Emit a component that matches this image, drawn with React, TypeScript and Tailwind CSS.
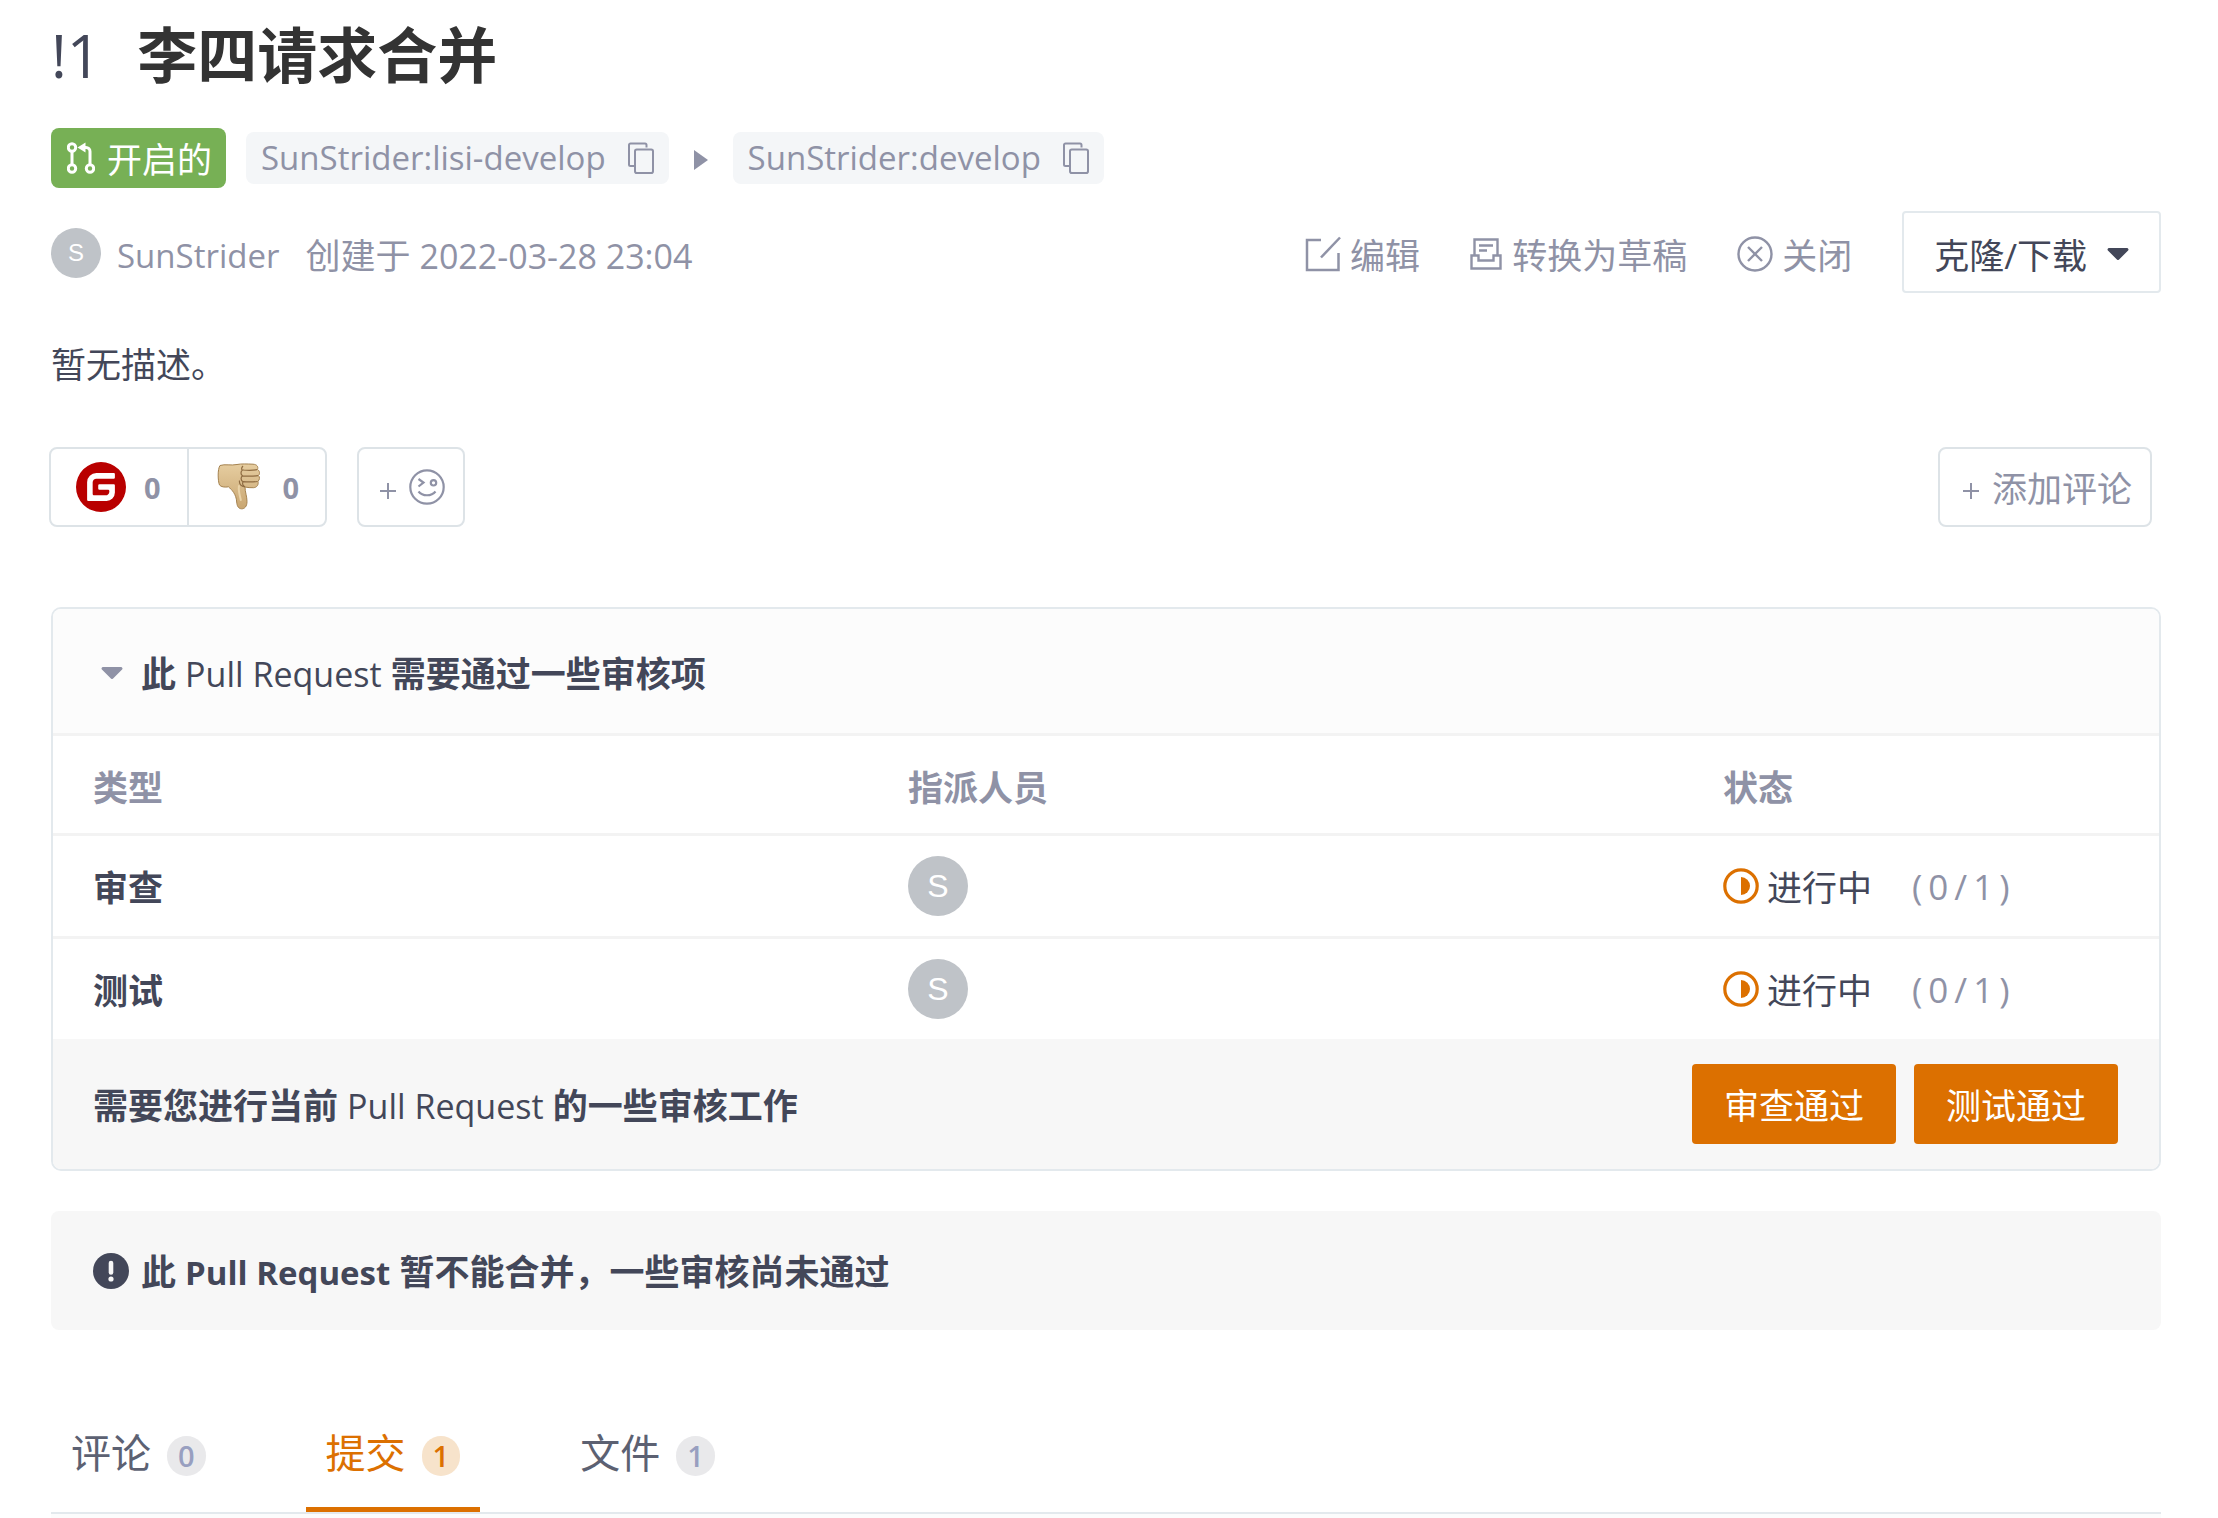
import { useState } from 'react'
import { SiGitee } from 'react-icons/si'

const reviewRows = [
  { type: '审查', member: 'S', status: '进行中', done: 0, total: 1 },
  { type: '测试', member: 'S', status: '进行中', done: 0, total: 1 },
]

const tabs = [
  { id: 'comments', label: '评论', count: 0 },
  { id: 'commits', label: '提交', count: 1 },
  { id: 'files', label: '文件', count: 1 },
]

function PullRequestIcon() {
  return (
    <svg className="w-7 h-8 shrink-0" viewBox="0 0 28 32" fill="none" stroke="currentColor" strokeWidth="3">
      <circle cx="5" cy="5.5" r="3.7" />
      <circle cx="5" cy="26.5" r="3.7" />
      <circle cx="23" cy="26.5" r="3.7" />
      <path d="M5 9v14M23 23V9.5a4 4 0 0 0-4-4h-3" />
      <path d="M18.5 0.5v10L10.5 5.5z" fill="currentColor" stroke="none" />
    </svg>
  )
}

function CopyIcon() {
  return (
    <svg className="w-[26px] h-8" viewBox="0 0 26 32" fill="none" stroke="currentColor" strokeWidth="2">
      <path d="M18.5 5.5V3a1.5 1.5 0 0 0-1.5-1.5H2.5A1.5 1.5 0 0 0 1 3v19.5A1.5 1.5 0 0 0 2.5 24H6" />
      <rect x="7" y="7.5" width="18" height="23.5" rx="1.8" />
    </svg>
  )
}

function EditIcon() {
  return (
    <svg className="w-9 h-9" viewBox="0 0 36 36" fill="none" stroke="currentColor" strokeWidth="2.5">
      <path d="M16 4H2v30h31.5V17" />
      <path d="M35 1.5 16 21.5" />
    </svg>
  )
}

function DraftIcon() {
  return (
    <svg className="w-8 h-8" viewBox="0 0 32 32" fill="none" stroke="currentColor" strokeWidth="2.4">
      <path d="M4.5 17V1.5h23V17" />
      <path d="M1.5 17.5h7v5h15v-5h7v13h-29z" />
      <path d="M9 7.5h14M9 12.500h8" />
    </svg>
  )
}

function CloseIcon() {
  return (
    <svg className="w-9 h-9" viewBox="0 0 36 36" fill="none" stroke="currentColor" strokeWidth="2.4">
      <circle cx="18" cy="18" r="16.5" />
      <path d="M11 11l14 14M25 11 11 25" />
    </svg>
  )
}

function Caret() {
  return (
    <svg className="w-[22px] h-3 shrink-0" viewBox="0 0 22 12" fill="currentColor">
      <path d="M2 0h18a1.5 1.5 0 0 1 1.1 2.5l-9 9a1.5 1.5 0 0 1-2.2 0l-9-9A1.5 1.5 0 0 1 2 0z" />
    </svg>
  )
}

function ThumbDownIcon() {
  return (
    <svg className="w-[44px] h-12" viewBox="0 0 44 48">
      <defs>
        <linearGradient id="skin" x1="0" y1="0" x2="0" y2="1">
          <stop offset="0" stopColor="#e6cda0" />
          <stop offset="1" stopColor="#c9a671" />
        </linearGradient>
      </defs>
      <path
        d="M3 2.5C8 .8 14 2.8 20 1.5c4-.8 10-.6 16-.3 4 .2 5.5 2.5 4.5 5.3 2.5 1.5 2.5 4.5 1 6 1.5 1.5 1.2 4.5-.5 5.7.8 3.5-1 6.3-4.5 6.5-3 .2-6-.2-8.500-.7 0 5 2 9.500 2 14.500 0 5-2.500 7.500-5.500 7.300-3.500-.2-4.500-3.300-4.800-6.800C19.200 31 15 27 11.500 23.800 8 24.500 4 24 2.500 22 .8 18 .5 6 3 2.500z"
        fill="url(#skin)"
        stroke="#a5824f"
        strokeWidth="1"
      />
      <path
        d="M28 24c-4-.5-6-3-5.5-6.5M40 6.7c-4 .8-9 .8-14 .3M41 12.600c-5 .8-10 .8-15.500.2M40.500 18.500c-5 .6-9 .6-14.500.2M26 3c-2 2-1.500 4-.5 4-2 1.500-2 4.500 0 5.700-2 1.500-1.800 5 .5 6-1 2 0 4.300 2 5"
        fill="none"
        stroke="#8f6c42"
        strokeWidth="1.2"
      />
      <path d="M22 23c-1 4 .8 9 1.8 14" fill="none" stroke="#ead3a8" strokeWidth="2" strokeLinecap="round" />
    </svg>
  )
}

function WinkIcon() {
  return (
    <svg className="w-9 h-9" viewBox="0 0 36 36" fill="none" stroke="currentColor" strokeWidth="2.2">
      <circle cx="18" cy="18" r="16.7" />
      <path d="M9.5 10l5 3.5-5 4" />
      <circle cx="24.5" cy="13.8" r="2.7" />
      <path d="M9.5 22.500c4 5 13 5 17 0" />
    </svg>
  )
}

function PlusIcon() {
  return (
    <svg className="w-4 h-4 mt-2" viewBox="0 0 16 16" stroke="currentColor" strokeWidth="2">
      <path d="M8 0v16M0 8h16" />
    </svg>
  )
}

function ProgressIcon() {
  return (
    <svg className="w-9 h-9 text-[#dc7000]" viewBox="0 0 36 36">
      <circle cx="18" cy="18" r="16.2" fill="none" stroke="currentColor" strokeWidth="3.2" />
      <path d="M18 9a9 9 0 0 1 0 18z" fill="currentColor" />
    </svg>
  )
}

function AlertIcon() {
  return (
    <svg className="w-9 h-9 shrink-0" viewBox="0 0 36 36">
      <circle cx="18" cy="18" r="18" fill="currentColor" />
      <path d="M18 10v9.500" stroke="#f7f7f7" strokeWidth="4.6" strokeLinecap="round" />
      <circle cx="18" cy="26" r="2.6" fill="#f7f7f7" />
    </svg>
  )
}

function BranchChip({ name }: { name: string }) {
  return (
    <div className="flex items-center gap-[22px] h-[52px] px-[15px] rounded-lg bg-[#f4f6f8] text-[#8f92a6]">
      <a href="#branch" className="text-[33px]">{name}</a>
      <button type="button" aria-label="复制">
        <CopyIcon />
      </button>
    </div>
  )
}

export default function App() {
  const [activeTab, setActiveTab] = useState('commits')

  return (
    <div className="min-h-screen flex flex-col bg-white pl-[51px] pr-[57px] pt-[14px] text-[35px] leading-[50px] text-[#434759] font-['Open_Sans','Noto_Sans_CJK_SC',sans-serif]">
      {/* Title */}
      <h1 className="flex items-center gap-9 text-[60px] leading-[82px]">
        <span className="font-normal">!1</span>
        <span className="font-bold text-[#333333]">李四请求合并</span>
      </h1>

      {/* Branches */}
      <div className="flex items-center mt-8">
        <span className="flex items-center gap-3 h-[60px] px-[14px] pl-4 rounded-lg bg-[#77b055] text-white">
          <PullRequestIcon />
          <span className="pt-1">开启的</span>
        </span>
        <div className="flex items-center gap-6 ml-5">
          <BranchChip name="SunStrider:lisi-develop" />
          <svg className="w-4 h-5 mt-1" viewBox="0 0 16 20" fill="#8f92a6">
            <path d="M1 0l14 10L1 20z" />
          </svg>
          <BranchChip name="SunStrider:develop" />
        </div>
      </div>

      {/* Author and actions */}
      <div className="flex items-center justify-between mt-[23px] text-[#8f92a6]">
        <div className="flex items-center">
          <span className="flex items-center justify-center w-[50px] h-[50px] mt-0.5 rounded-full bg-[#bfc3c8] text-white text-2xl font-['Liberation_Sans',sans-serif]">S</span>
          <a href="#author" className="ml-4 pt-2 text-[33px]">SunStrider</a>
          <span className="ml-[26px] pt-2">创建于</span>
          <time className="ml-[9px] pt-2 text-[34px]">2022-03-28 23:04</time>
        </div>
        <div className="flex items-center gap-[50px]">
          <button type="button" className="flex items-center gap-[9px] pt-1">
            <EditIcon />
            <span className="pt-1">编辑</span>
          </button>
          <button type="button" className="flex items-center gap-[10px] pt-1">
            <DraftIcon />
            <span className="pt-1">转换为草稿</span>
          </button>
          <button type="button" className="flex items-center gap-[9px] pt-1">
            <CloseIcon />
            <span className="pt-1">关闭</span>
          </button>
          <button type="button" className="flex items-center gap-5 h-[82px] px-[30px] pt-1 border-2 border-[#e3e9ed] rounded text-[#434759]">
            <span className="pt-1">克隆/下载</span>
            <Caret />
          </button>
        </div>
      </div>

      <p className="mt-[47px]">暂无描述。</p>

      {/* Reactions */}
      <div className="flex items-center justify-between mt-[57px] -ml-0.5 pr-[9px] text-[#8f92a6]">
        <div className="flex items-center gap-[30px]">
          <div className="flex h-20 border-2 border-[#dde3e7] rounded-lg text-[29px] font-bold">
            <button type="button" className="flex items-center gap-[18px] pl-[25px] pr-[26px]">
              <SiGitee className="w-[50px] h-[50px] text-[#b90000]" />
              <span className="pt-0.5">0</span>
            </button>
            <button type="button" className="flex items-center gap-[22px] pl-7 pr-[26px] border-l-2 border-[#dde3e7]">
              <ThumbDownIcon />
              <span className="pt-0.5">0</span>
            </button>
          </div>
          <button type="button" aria-label="添加表情" className="flex items-center gap-[13px] h-20 pl-[21px] pr-[18px] border-2 border-[#dde3e7] rounded-lg">
            <PlusIcon />
            <WinkIcon />
          </button>
        </div>
        <button type="button" className="flex items-center gap-[13px] h-20 pl-[23px] pr-[18px] border-2 border-[#dde3e7] rounded-lg">
          <PlusIcon />
          <span className="pt-1">添加评论</span>
        </button>
      </div>

      {/* Review panel */}
      <section className="mt-20 border-2 border-[#e3e9ed] rounded-[10px] overflow-hidden">
        <header className="flex items-center h-[127px] border-b-3 border-[#f3f3f3] bg-[#fcfcfc] px-12 pt-1">
          <button type="button" aria-label="收起" className="text-[#8f92a6]">
            <Caret />
          </button>
          <h2 className="ml-[18px] pt-0.5 font-bold">
            此 <span className="text-[34px] font-normal">Pull Request</span> 需要通过一些审核项
          </h2>
        </header>
        <table className="w-full table-fixed border-separate border-spacing-0 text-left">
          <thead>
            <tr className="h-[100px] text-[#8f92a6]">
              <th className="w-[815px] pl-10 pt-1.5 border-b-3 border-[#f3f3f3] font-bold">类型</th>
              <th className="w-[815px] pl-10 pt-1.5 border-b-3 border-[#f3f3f3] font-bold">指派人员</th>
              <th className="pl-10 pt-1.5 border-b-3 border-[#f3f3f3] font-bold">状态</th>
            </tr>
          </thead>
          <tbody className="[&>tr:last-child>td]:border-b-0">
            {reviewRows.map((row) => (
              <tr key={row.type} className="h-[103px] last:h-[100px]">
                <td className="pl-10 pt-1 border-b-3 border-[#f3f3f3] font-bold">{row.type}</td>
                <td className="pl-10 border-b-3 border-[#f3f3f3]">
                  <span className="flex items-center justify-center w-[60px] h-[60px] rounded-full bg-[#bfc3c8] text-white text-[32px] font-['Liberation_Sans',sans-serif]">
                    {row.member}
                  </span>
                </td>
                <td className="pl-10 border-b-3 border-[#f3f3f3]">
                  <div className="flex items-center gap-2">
                    <ProgressIcon />
                    <span className="pt-1">{row.status}</span>
                    <span className="flex gap-1.5 ml-8 pt-0.5 text-[#8f92a6]">
                      <span>(</span>
                      <span>{row.done}</span>
                      <span>/</span>
                      <span>{row.total}</span>
                      <span>)</span>
                    </span>
                  </div>
                </td>
              </tr>
            ))}
          </tbody>
        </table>
        <footer className="flex items-center justify-between h-[130px] pl-10 pr-[41px] bg-[#f7f7f7]">
          <p className="pt-1 font-bold">
            需要您进行当前 <span className="text-[34px] font-normal">Pull Request</span> 的一些审核工作
          </p>
          <div className="flex gap-[18px]">
            <button type="button" className="h-20 px-8 pt-1 rounded bg-[#dc7000] text-white">审查通过</button>
            <button type="button" className="h-20 px-8 pt-1 rounded bg-[#dc7000] text-white">测试通过</button>
          </div>
        </footer>
      </section>

      {/* Merge state */}
      <div className="flex items-center gap-3 h-[119px] mt-10 px-[42px] rounded-lg bg-[#f7f7f7] font-bold">
        <AlertIcon />
        <p className="pt-1">
          此 <span className="text-[33px]">Pull Request</span> 暂不能合并，一些审核尚未通过
        </p>
      </div>

      {/* Tabs */}
      <nav className="flex gap-20 mt-16 border-b-2 border-[#e3e9ed]" role="tablist">
        {tabs.map((tab) => {
          const active = tab.id === activeTab
          return (
            <button
              key={tab.id}
              type="button"
              role="tab"
              aria-selected={active}
              onClick={() => setActiveTab(tab.id)}
              className={
                active
                  ? 'flex items-center gap-4 h-[118px] px-5 pt-1 border-b-5 border-[#dc7000] text-[40px] text-[#dc7000]'
                  : 'flex items-center gap-4 h-[118px] px-5 pt-1 border-b-5 border-transparent text-[40px] text-[#5c6172]'
              }
            >
              {tab.label}
              <span
                className={
                  active
                    ? 'h-10 px-[11px] mt-1.5 rounded-full bg-[#f7e3cb] text-[29px] leading-10 font-semibold'
                    : 'h-10 px-[11px] mt-1.5 rounded-full bg-[#e9e9eb] text-[29px] leading-10 font-semibold text-[#989fc0]'
                }
              >
                {tab.count}
              </span>
            </button>
          )
        })}
      </nav>
      <div className="grow bg-[#fcfcfc]" />
    </div>
  )
}
